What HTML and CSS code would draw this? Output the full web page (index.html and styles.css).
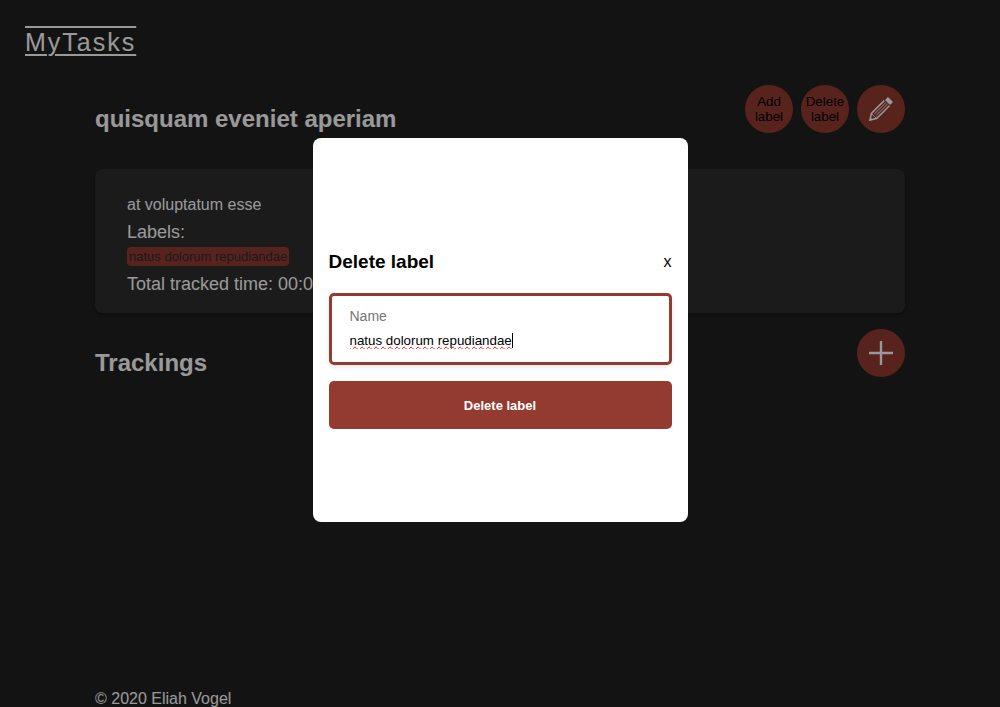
FILE: index.html
```html
<!DOCTYPE html>
<html lang="en">
<head>
<meta charset="utf-8">
<meta name="viewport" content="width=device-width, initial-scale=1">
<title>MyTasks</title>
<link rel="stylesheet" href="styles.css">
</head>
<body>
<div class="page">
  <header class="site-header"><a class="logo" href="#">MyTasks</a></header>
  <main class="content">
    <div class="title-row">
      <h1 class="title">quisquam eveniet aperiam</h1>
      <div class="actions">
        <button class="round" type="button">Add label</button>
        <button class="round" type="button">Delete label</button>
        <button class="round" type="button" aria-label="Edit task">
          <svg width="24" height="24" viewBox="0 0 24 24" fill="none" stroke="#fff">
            <path d="M15.2 3.6 L2.4 16.4 L0.9 23.1 L7.6 21.6 L20.4 8.8" stroke-width="1.5"/>
            <path d="M5.6 16.8 L17 5.4 M7.2 18.4 L18.6 7" stroke-width="0.9"/>
            <path d="M2.4 16.4 L7.6 21.6" stroke-width="0.8"/>
            <path d="M0.3 23.7 L1.2 20.2 L3.8 22.8 Z" fill="#fff" stroke="none"/>
            <path d="M16 3 L19 0 L24 5 L21 8 Z" fill="#fff" stroke="none"/>
          </svg>
        </button>
      </div>
    </div>
    <section class="card">
      <p class="description">at voluptatum esse</p>
      <p class="line">Labels:</p>
      <div class="chips"><span class="chip">natus dolorum repudiandae</span></div>
      <p class="line">Total tracked time: 00:00:00</p>
    </section>
    <div class="title-row">
      <h2 class="title">Trackings</h2>
      <button class="round" type="button" aria-label="Add tracking">
        <svg width="24" height="24" viewBox="0 0 24 24" stroke="#fff" stroke-width="2.4"><path d="M12 0V24M0 12H24"/></svg>
      </button>
    </div>
  </main>
  <footer class="site-footer">© 2020 Eliah Vogel</footer>
</div>
<div class="overlay">
  <form class="modal" role="dialog" aria-modal="true" aria-labelledby="modal-title">
    <div class="modal-header">
      <h3 class="modal-title" id="modal-title">Delete label</h3>
      <button class="close" type="button">x</button>
    </div>
    <div class="field">
      <label class="field-label" for="name">Name</label>
      <div class="field-row">
        <input class="field-input" id="name" type="text" value="natus dolorum repudiandae" autofocus>
        <span class="caret" aria-hidden="true"></span>
      </div>
    </div>
    <button class="submit" type="button">Delete label</button>
  </form>
</div>
</body>
</html>
```
FILE: styles.css
```css
* {
  box-sizing: border-box;
}

body {
  margin: 0;
  background: #212121;
  color: #fff;
  font-family: "Liberation Sans", Arial, sans-serif;
  font-size: 16px;
}

h1, h2, h3, p {
  margin: 0;
}

button {
  border: 0;
  padding: 0;
  color: #000;
  font-family: inherit;
  cursor: pointer;
}

.page {
  display: flex;
  flex-direction: column;
  min-height: 100vh;
}

.site-header {
  padding: 28px 25px;
}

.logo {
  display: inline-block;
  color: #fff;
  font-size: 25px;
  line-height: 29px;
  letter-spacing: 2px;
  text-decoration: underline overline 2px;
  text-underline-offset: 3px;
}

.content {
  flex: 1;
  display: flex;
  flex-direction: column;
  width: 81%;
  margin: 0 auto;
}

.title-row {
  display: flex;
  align-items: flex-end;
  justify-content: space-between;
}

.title {
  font-size: 24px;
  line-height: 28px;
}

.actions {
  display: flex;
  gap: 8px;
}

.round {
  display: grid;
  place-items: center;
  width: 48px;
  height: 48px;
  border-radius: 50%;
  background: #933b31;
}

.card {
  margin: 36px 0 16px;
  padding: 24px 32px 14px;
  border-radius: 8px;
  background: #2d2d2d;
  box-shadow: 0 2px 4px rgba(0, 0, 0, 0.3);
}

.description {
  line-height: 24px;
}

.line {
  font-size: 18px;
  line-height: 30px;
}

.chips {
  display: flex;
  margin-bottom: 3px;
}

.chip {
  padding: 2px;
  border-radius: 4px;
  background: #933b31;
  color: #2d2d2d;
  font-size: 13px;
  line-height: 15px;
}

.site-footer {
  width: 81%;
  margin: 0 auto;
  line-height: 16px;
}

.overlay {
  position: fixed;
  inset: 0;
  display: flex;
  align-items: center;
  justify-content: center;
  padding-bottom: 47px;
  background: rgba(0, 0, 0, 0.4);
}

.modal {
  display: flex;
  flex-direction: column;
  width: 375px;
  max-width: 100%;
  padding: 93px 16px;
  border-radius: 8px;
  background: #fff;
  color: #000;
}

.modal-header {
  display: flex;
  align-items: center;
  justify-content: space-between;
  padding: 20px 0;
}

.modal-title {
  font-size: 19px;
  line-height: 22px;
}

.close {
  background: none;
  font-size: 16px;
}

.field {
  display: flex;
  flex-direction: column;
  gap: 8px;
  margin-bottom: 16px;
  padding: 12px 18px 13px;
  border: 3px solid #933b31;
  border-radius: 5px;
  box-shadow: 0 2px 4px rgba(0, 0, 0, 0.1);
}

.field-label {
  color: #757575;
  font-size: 14px;
  line-height: 16px;
}

.field-row {
  display: flex;
  align-items: center;
}

.field-input {
  field-sizing: content;
  max-width: 100%;
  padding: 0;
  border: 0;
  outline: 0;
  background: none;
  color: #000;
  caret-color: transparent;
  font-family: inherit;
  line-height: 17px;
  text-decoration: underline wavy #f00 1px;
  text-decoration-skip-ink: none;
}

.caret {
  width: 1px;
  height: 15px;
  background: #000;
}

.submit {
  height: 48px;
  border-radius: 5px;
  background: #933b31;
  color: #fff;
  font-size: 13px;
  font-weight: bold;
}
```
